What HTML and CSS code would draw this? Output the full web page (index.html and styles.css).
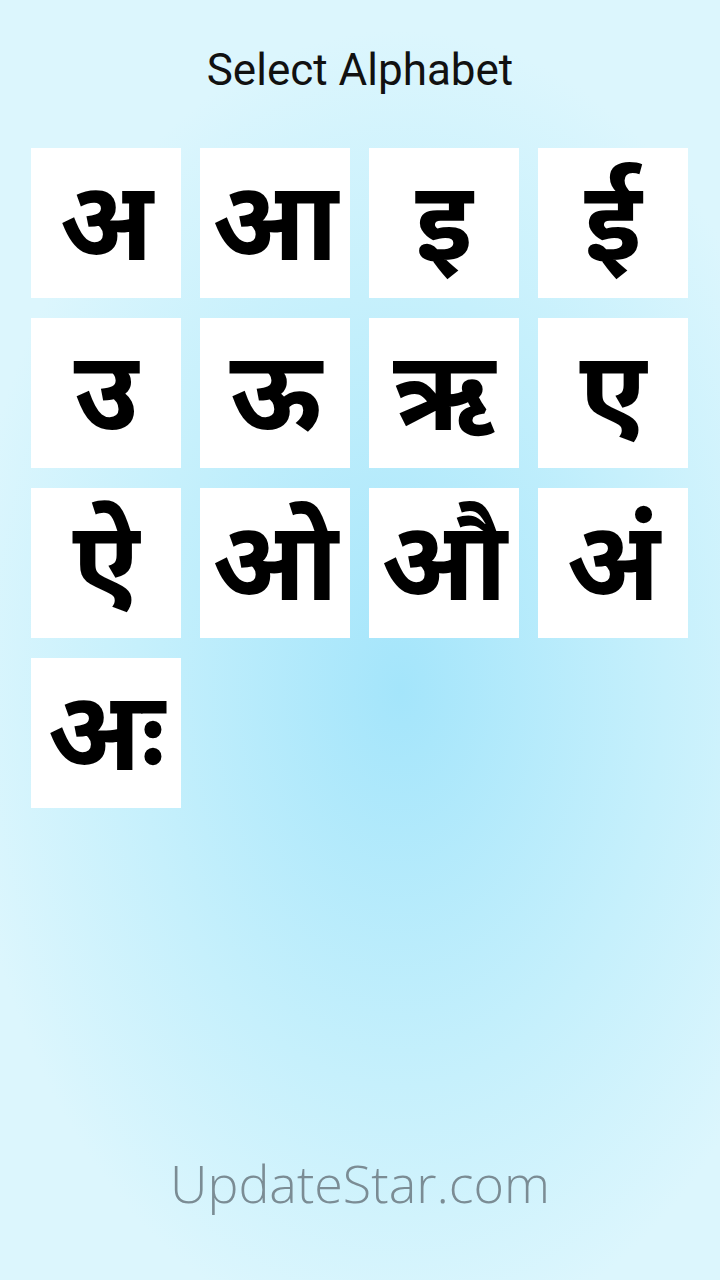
FILE: index.html
```html
<!DOCTYPE html>
<html>
<head>
<meta charset="utf-8">
<link rel="stylesheet" href="styles.css">
</head>
<body>
<div class="page">
  <h1 class="title">Select Alphabet</h1>
  <div class="grid">
    <div class="tile">अ</div>
    <div class="tile">आ</div>
    <div class="tile">इ</div>
    <div class="tile">ई</div>
    <div class="tile">उ</div>
    <div class="tile">ऊ</div>
    <div class="tile">ऋ</div>
    <div class="tile">ए</div>
    <div class="tile">ऐ</div>
    <div class="tile">ओ</div>
    <div class="tile">औ</div>
    <div class="tile">अं</div>
    <div class="tile">अः</div>
  </div>
  <div class="footer">UpdateStar.com</div>
</div>
</body>
</html>
```
FILE: styles.css
```css
html, body {
  margin: 0;
  padding: 0;
}
body {
  width: 720px;
  height: 1280px;
  overflow: hidden;
  background: radial-gradient(ellipse 440px 660px at 400px 690px, #a4e5fb 0%, #c6f0fc 60%, #dcf6fd 100%);
  background-color: #dcf6fd;
}
.page {
  height: 1280px;
  display: flex;
  flex-direction: column;
  align-items: center;
}
.title {
  margin: 43px 0 0 0;
  font-family: Roboto, "Liberation Sans", sans-serif;
  font-weight: 400;
  font-size: 44px;
  line-height: 54px;
  color: #111;
}
.grid {
  align-self: flex-start;
  margin: 51px 0 0 31px;
  display: grid;
  grid-template-columns: repeat(4, 150px);
  column-gap: 19px;
  row-gap: 20px;
}
.tile {
  box-sizing: border-box;
  width: 150px;
  height: 150px;
  padding-bottom: 12px;
  background: #fff;
  display: flex;
  align-items: center;
  justify-content: center;
  font-family: "Noto Sans", "DejaVu Sans", sans-serif;
  font-weight: 700;
  font-size: 110px;
  line-height: 138px;
  color: #000;
}
.footer {
  margin-top: auto;
  margin-bottom: 62px;
  font-family: "Open Sans", "Noto Sans", sans-serif;
  font-weight: 300;
  font-size: 52px;
  color: #7b8c94;
}
```
